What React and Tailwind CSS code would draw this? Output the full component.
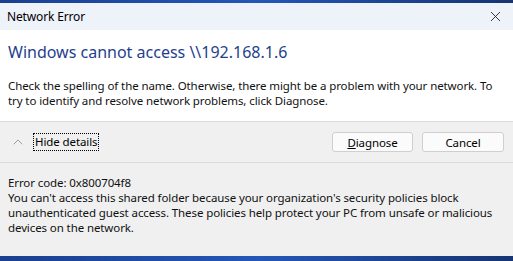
import { X, ChevronUp } from "lucide-react";

function App() {
  return (
    <div
      className="w-[513px] h-[261px] overflow-hidden flex flex-col bg-gradient-to-r from-[#1a3f8f] via-[#2457b8] to-[#163472] text-[11.5px] leading-[15px] tracking-[-0.1px] text-black"
      style={{ fontFamily: '"Segoe UI", "Noto Sans", sans-serif' }}
    >
      {/* wallpaper strip */}
      <div className="h-[3px] shrink-0"></div>

      {/* Title bar */}
      <div className="h-[27px] shrink-0 bg-[#eef2f9] flex items-center justify-between pl-[7px] pr-[9px]">
        <span className="text-[12px] tracking-[-0.15px]">Network Error</span>
        <X size={17} strokeWidth={1.2} className="text-[#1a1a1a]" />
      </div>

      {/* Main content */}
      <div className="h-[92px] shrink-0 bg-white pl-[8px] pr-[2px] pt-[12px] border-b border-[#dcdcdc]">
        <h1 className="text-[16px] leading-[20px] tracking-normal text-[#1f3f8f]">
          Windows cannot access \\192.168.1.6
        </h1>
        <p className="mt-[16px] text-[#111]">
          Check the spelling of the name. Otherwise, there might be a problem with your network. To
          <br />
          try to identify and resolve network problems, click Diagnose.
        </p>
      </div>

      {/* Footer row */}
      <div className="h-[41px] shrink-0 bg-[#f0f0f0] border-b border-[#dcdcdc] flex items-center justify-between pl-[10px] pr-[9px]">
        <div className="flex items-center gap-[7px]">
          <ChevronUp size={16} strokeWidth={1.2} className="text-[#8a8a8a]" />
          <span className="border border-dotted border-black px-[1px] leading-[16px]">Hide details</span>
        </div>
        <div className="flex gap-[9px]">
          <button className="w-[81px] h-[20px] bg-[#fbfbfb] border border-[#cfcfcf] rounded-[3px]">
            <span className="underline">D</span>iagnose
          </button>
          <button className="w-[82px] h-[20px] bg-[#fbfbfb] border border-[#cfcfcf] rounded-[3px]">
            Cancel
          </button>
        </div>
      </div>

      {/* Details */}
      <div className="h-[93px] shrink-0 bg-[#f0f0f0] pl-[8px] pr-[2px] pt-[12px] text-[#111]">
        <p>Error code: 0x800704f8</p>
        <p>
          You can't access this shared folder because your organization's security policies block
          <br />
          unauthenticated guest access. These policies help protect your PC from unsafe or malicious
          <br />
          devices on the network.
        </p>
      </div>
    </div>
  );
}

export default App;
